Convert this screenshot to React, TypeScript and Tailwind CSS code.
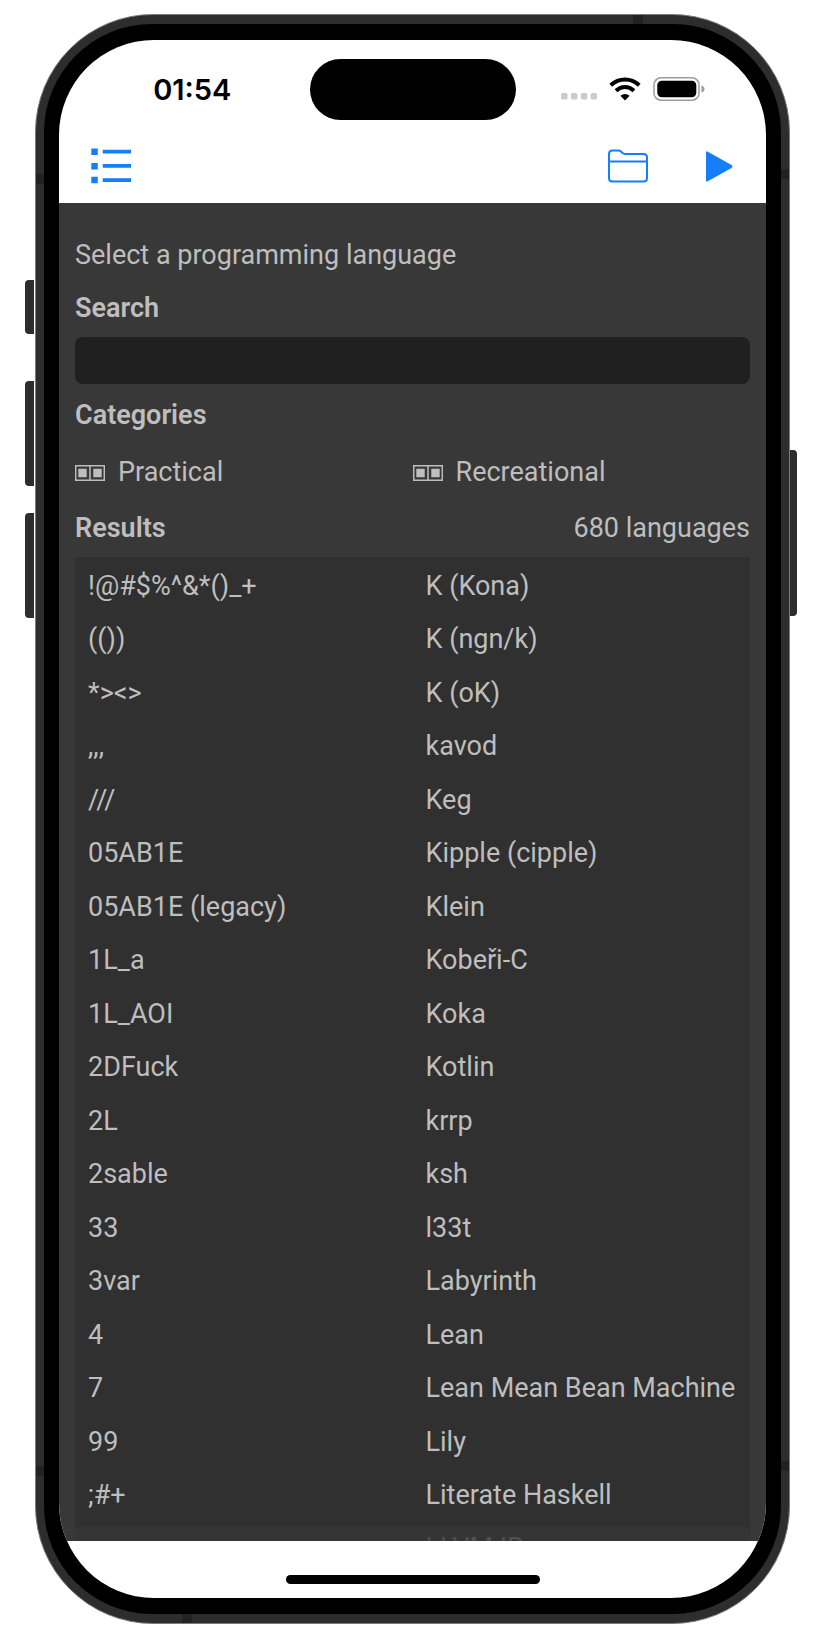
const leftColumn = [
  "!@#$%^&*()_+",
  "(())",
  "*><>",
  ",,,",
  "///",
  "05AB1E",
  "05AB1E (legacy)",
  "1L_a",
  "1L_AOI",
  "2DFuck",
  "2L",
  "2sable",
  "33",
  "3var",
  "4",
  "7",
  "99",
  ";#+",
]

const rightColumn = [
  "K (Kona)",
  "K (ngn/k)",
  "K (oK)",
  "kavod",
  "Keg",
  "Kipple (cipple)",
  "Klein",
  "Kobeři-C",
  "Koka",
  "Kotlin",
  "krrp",
  "ksh",
  "l33t",
  "Labyrinth",
  "Lean",
  "Lean Mean Bean Machine",
  "Lily",
  "Literate Haskell",
]

function ListIcon() {
  return (
    <svg width="40" height="36" viewBox="0 0 40 36" fill="#147efb" aria-hidden="true">
      <path d="M.3.5h6.500V7H.3zM.3 15h6.500v6.500H.3zM.3 28.700h6.500v6.500H.3z" />
      <path d="M11.700 1.700H40v3.800H11.700zM11.700 16H40v3.800H11.700zM11.700 30.200H40V34H11.700z" />
    </svg>
  )
}

function FolderIcon() {
  return (
    <svg width="40" height="34" viewBox="0 0 40 34" fill="none" stroke="#147efb" strokeWidth="2" strokeLinejoin="round" aria-hidden="true">
      <path d="M1 29V5Q1 1.500 4.500 1.500h5.500q2 0 3.200 1.200l1.300 1.200q1 1 2.700 1H35.500q3.500 0 3.500 3.500V29q0 3.500-3.500 3.500h-31Q1 32.500 1 29z" />
      <path d="M1 12.500h38" />
    </svg>
  )
}

function PlayIcon() {
  return (
    <svg width="28" height="32" viewBox="0 0 28 32" fill="#147efb" aria-hidden="true">
      <path d="M0 2.700Q0 .7 1.800 1.700L25.500 15q2 1.500 0 3L1.800 31.300Q0 32.300 0 30.300z" />
    </svg>
  )
}

function StatusIcons() {
  return (
    <div className="flex items-center gap-3">
      <svg width="36" height="24" viewBox="0 0 36 24" fill="#cbcbcb" aria-hidden="true">
        <rect x="0" y="16" width="6.500" height="6.500" rx="1.500" />
        <rect x="9.900" y="16" width="6.500" height="6.500" rx="1.500" />
        <rect x="19.800" y="16" width="6.500" height="6.500" rx="1.500" />
        <rect x="29.700" y="16" width="6.300" height="6.500" rx="1.500" />
      </svg>
      <svg width="32" height="24" viewBox="0 0 32 24" fill="none" stroke="#000" strokeWidth="4" aria-hidden="true">
        <path d="M1.700 8.200Q8 2.400 16 2.400T30.300 8.200" />
        <path d="M7 13.700Q11 10 16 10t9 3.700" />
        <path d="M16 23.500l-4.600-4.700Q16 15 20.600 18.800z" fill="#000" stroke="none" />
      </svg>
      <svg width="52" height="24" viewBox="0 0 52 24" aria-hidden="true">
        <rect x="1" y=".8" width="45" height="22.400" rx="7" fill="none" stroke="#9c9c9c" strokeWidth="1.500" />
        <rect x="4.300" y="3.800" width="39" height="16.500" rx="4.500" fill="#000" />
        <path d="M48.500 8.500q3 1 3 3.500t-3 3.500z" fill="#9c9c9c" />
      </svg>
    </div>
  )
}

function Category({ name }: { name: string }) {
  return (
    <label className="flex h-[54px] items-center gap-[13px] pt-[2px]">
      <input type="checkbox" className="sr-only" defaultChecked />
      <svg width="30" height="16" viewBox="0 0 30 16" className="mt-[2px]" aria-hidden="true">
        <path d="M.7.7h28.600v14.600H.7zM15 .7v14.600" fill="none" stroke="#bebebe" strokeWidth="1.500" />
        <path d="M3.300 3.800h8.400v8.400H3.300zM18.300 3.800h8.400v8.400h-8.400z" fill="#bebebe" />
      </svg>
      {name}
    </label>
  )
}

function Column({ items }: { items: string[] }) {
  return (
    <ul className="flex flex-1 flex-col">
      {items.map((item) => (
        <li key={item} className="flex flex-1 items-center pl-[13px]">
          <a href="#" className="whitespace-nowrap">{item}</a>
        </li>
      ))}
    </ul>
  )
}

export default function App() {
  return (
    <div className="bg-white pt-[14px] pr-[30px] pb-1 pl-[35px] font-['Roboto',sans-serif]">
      <div className="relative mx-auto max-w-[900px]">
        {/* side buttons */}
        <span className="absolute top-[266px] -left-[10px] h-[54px] w-[9px] rounded-l-sm bg-[#2d2d2d]" />
        <span className="absolute top-[367px] -left-[10px] h-[105px] w-[9px] rounded-l-sm bg-[#2d2d2d]" />
        <span className="absolute top-[499px] -left-[10px] h-[105px] w-[9px] rounded-l-sm bg-[#2d2d2d]" />
        <span className="absolute top-[436px] -right-[7px] h-[166px] w-[7px] rounded-r-sm bg-[#2d2d2d]" />

        <div className="flex min-h-[1610px] flex-col rounded-[118px] border border-[#7c7c7c] bg-[#2d2d2d] px-2 py-[9px]">
          {/* antenna bands */}
          <span className="absolute top-[160px] left-px h-[10px] w-2 bg-[#222222]" />
          <span className="absolute bottom-[148px] left-px h-[10px] w-2 bg-[#222222]" />
          <span className="absolute top-[155px] right-px h-[10px] w-2 bg-[#222222]" />
          <span className="absolute right-px bottom-[153px] h-[10px] w-2 bg-[#222222]" />
          <span className="absolute top-px right-[147px] h-[9px] w-[10px] bg-[#222222]" />
          <span className="absolute bottom-px left-[147px] h-[9px] w-[10px] bg-[#222222]" />

          <div className="flex flex-1 flex-col rounded-[108px] bg-black px-[15px] py-4">
            <div className="flex flex-1 flex-col overflow-hidden rounded-[95px] bg-white">
              <header>
                <div className="flex items-center pt-[19px]">
                  <div className="flex flex-1 justify-center pl-4 font-['Inter',sans-serif] text-[29px] font-semibold text-black">
                    01:54
                  </div>
                  <div className="h-[61px] w-[206px] rounded-full bg-black" />
                  <div className="flex flex-1 justify-center pr-4 pb-[2px]">
                    <StatusIcons />
                  </div>
                </div>
                <nav className="flex h-[83px] items-center justify-between px-8 pt-2">
                  <button type="button" aria-label="Menu"><ListIcon /></button>
                  <div className="flex items-center gap-[58px]">
                    <button type="button" aria-label="Open"><FolderIcon /></button>
                    <button type="button" aria-label="Run"><PlayIcon /></button>
                  </div>
                </nav>
              </header>

              <main className="flex flex-1 flex-col bg-[#383838] px-4 pt-7 text-[27px] text-[#bebebe]">
                <h1 className="flex h-[46px] items-center pt-[2px]">Select a programming language</h1>
                <label htmlFor="search" className="flex h-[60px] items-center pt-[2px] font-semibold">Search</label>
                <input id="search" type="text" className="h-[47px] w-full rounded-lg bg-[#202020] px-3 outline-none" />
                <h2 className="flex h-[60px] items-center pt-[2px] font-semibold">Categories</h2>
                <div className="grid grid-cols-2">
                  <Category name="Practical" />
                  <Category name="Recreational" />
                </div>
                <div className="flex h-[59px] items-center justify-between pt-[2px]">
                  <h2 className="font-semibold">Results</h2>
                  <span>680 languages</span>
                </div>
                <div className="flex flex-1 bg-[#303030] pt-[2px] pb-[5px]">
                  <Column items={leftColumn} />
                  <Column items={rightColumn} />
                </div>
                {/* next row fading out under the bottom edge */}
                <div className="grid h-[14px] grid-cols-2 overflow-hidden bg-[#353535] text-[#505050]">
                  <span className="col-start-2 pt-px pl-[13px]">LLVM IR</span>
                </div>
              </main>

              <footer className="flex h-[57px] items-center justify-center pt-5">
                <div className="h-[9px] w-[254px] rounded-full bg-black" />
              </footer>
            </div>
          </div>
        </div>
      </div>
    </div>
  )
}
